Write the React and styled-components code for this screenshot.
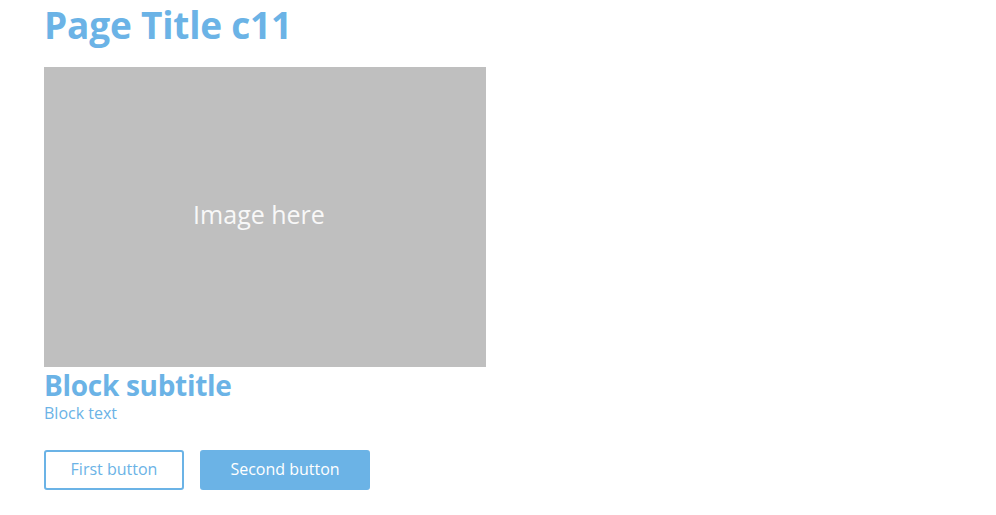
import styled, { createGlobalStyle } from "styled-components";

const GlobalStyle = createGlobalStyle`
  body {
    margin: 0;
    background: #fff;
    font-family: "Open Sans", "Liberation Sans", sans-serif;
  }
`;

const blue = "#6bb3e6";

const Page = styled.main`
  padding: 0 44px;
  display: flex;
  flex-direction: column;
  align-items: flex-start;
`;

const Title = styled.h1`
  margin: 0;
  font-size: 37px;
  line-height: 50px;
  font-weight: 700;
  color: ${blue};
  letter-spacing: -0.2px;
`;

const Placeholder = styled.div`
  margin-top: 17px;
  width: 442px;
  height: 300px;
  box-sizing: border-box;
  padding: 0 12px 6px 0;
  background: #bfbfbf;
  display: flex;
  align-items: center;
  justify-content: center;
  color: #f8f8f8;
  font-size: 25px;
  font-family: "Open Sans", sans-serif;
`;

const Subtitle = styled.h2`
  margin: 0;
  font-size: 28px;
  line-height: 36px;
  font-weight: 700;
  color: ${blue};
  letter-spacing: -0.3px;
`;

const Text = styled.p`
  margin: 0;
  font-size: 16px;
  line-height: 20px;
  color: ${blue};
`;

const Actions = styled.div`
  margin-top: 27px;
  display: flex;
  gap: 16px;
`;

const Button = styled.button`
  box-sizing: border-box;
  height: 40px;
  width: ${(p) => p.$width}px;
  padding: 0 0 2px;
  border: 2px solid ${blue};
  border-radius: 3px;
  background: ${(p) => (p.$filled ? blue : "#fff")};
  color: ${(p) => (p.$filled ? "#fff" : blue)};
  font-family: "Open Sans", sans-serif;
  font-size: 16px;
  cursor: pointer;
`;

export default function App() {
  return (
    <>
      <GlobalStyle />
      <Page>
        <Title>Page Title c11</Title>
        <Placeholder>Image here</Placeholder>
        <Subtitle>Block subtitle</Subtitle>
        <Text>Block text</Text>
        <Actions>
          <Button $width={140}>First button</Button>
          <Button $width={170} $filled>
            Second button
          </Button>
        </Actions>
      </Page>
    </>
  );
}
